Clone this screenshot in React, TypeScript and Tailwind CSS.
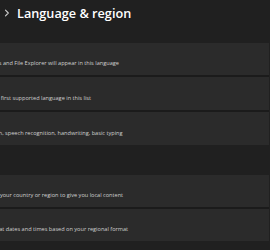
import React from "react";

type CardProps = {
  title: string;
  subtitle: string;
  height: string;
  pad: string;
};

function Card({ title, subtitle, height, pad }: CardProps) {
  return (
    <div className={`flex items-center bg-[#2b2b2b] ${height} ${pad}`}>
      <div className="flex flex-col whitespace-nowrap">
        <span className="text-[6.2px] leading-[8px] text-white">{title}</span>
        <span className="text-[5.6px] leading-[8px] text-[#d0d0d0]">{subtitle}</span>
      </div>
    </div>
  );
}

export default function App() {
  return (
    <div className="w-[270px] h-[250px] overflow-hidden bg-[#202020] font-['Open_Sans','Noto_Sans',sans-serif]">
      <header className="flex h-[43px] items-start pt-[5px]">
        <div className="flex h-[16px] items-center">
          <span className="flex w-0 justify-end whitespace-nowrap text-[12.5px] font-semibold text-[#cfcfcf]">
            Time &amp; language
          </span>
          <svg viewBox="0 0 6 8" className="ml-[4px] h-[8px] w-[6px]" fill="none">
            <path d="M1.5 1.2 L4.3 4 L1.5 6.8" stroke="#cfcfcf" strokeWidth="1.1" strokeLinecap="round" strokeLinejoin="round" />
          </svg>
          <h1 className="ml-[7px] whitespace-nowrap text-[12.7px] font-semibold leading-[16px] text-white">
            Language &amp; region
          </h1>
        </div>
      </header>

      <div className="-ml-[100px] mr-[1px]">
        <div className="flex flex-col gap-[2px] bg-[#1b1b1b]">
          <Card
            height="h-[32px]"
            pad="pl-[22px]"
            title="Windows display language"
            subtitle="Windows features like Settings and File Explorer will appear in this language"
          />
          <Card
            height="h-[33px]"
            pad="pl-[40px]"
            title="Preferred languages"
            subtitle="Apps will appear in the first supported language in this list"
          />
          <Card
            height="h-[33px]"
            pad="pl-[23px]"
            title="English (United States)"
            subtitle="Language pack, text-to-speech, speech recognition, handwriting, basic typing"
          />
        </div>

        <div className="flex h-[30px] items-center pl-[24px]">
          <span className="text-[6.6px] font-semibold text-white">Region</span>
        </div>

        <div className="flex flex-col gap-[2px] bg-[#1b1b1b]">
          <Card
            height="h-[32px]"
            pad="pl-[22px]"
            title="Country or region"
            subtitle="Windows and apps might use your country or region to give you local content"
          />
          <Card
            height="h-[32px]"
            pad="pl-[20px]"
            title="Regional format"
            subtitle="Windows and some apps format dates and times based on your regional format"
          />
        </div>
      </div>
    </div>
  );
}
